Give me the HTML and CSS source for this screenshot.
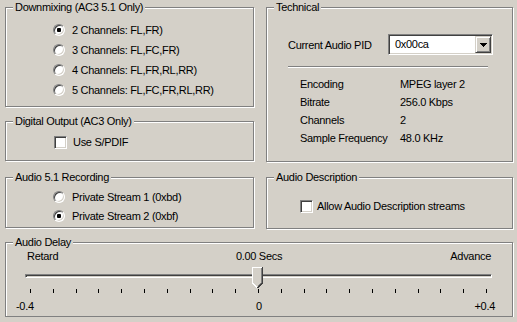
FILE: index.html
```html
<!DOCTYPE html>
<html lang="en">
<head>
    <meta charset="UTF-8">
    <title>Audio Settings</title>
    <link rel="stylesheet" href="styles.css">
</head>
<body>
<div class="dialog">
    <div class="col">
        <div class="group downmix">
            <span class="legend">Downmixing (AC3 5.1 Only)</span>
            <label class="opt"><span class="radio on"></span>2 Channels: FL,FR)</label>
            <label class="opt"><span class="radio"></span>3 Channels: FL,FC,FR)</label>
            <label class="opt"><span class="radio"></span>4 Channels: FL,FR,RL,RR)</label>
            <label class="opt"><span class="radio"></span>5 Channels: FL,FC,FR,RL,RR)</label>
        </div>

        <div class="group digital">
            <span class="legend">Digital Output (AC3 Only)</span>
            <label class="opt"><span class="check"></span>Use S/PDIF</label>
        </div>

        <div class="group rec">
            <span class="legend">Audio 5.1 Recording</span>
            <label class="opt"><span class="radio"></span>Private Stream 1 (0xbd)</label>
            <label class="opt"><span class="radio on"></span>Private Stream 2 (0xbf)</label>
        </div>
    </div>

    <div class="col">
        <div class="group technical">
            <span class="legend">Technical</span>
            <div class="pid-row">
                <span class="pid-label">Current Audio PID</span>
                <div class="combo">
                    <span class="combo-value">0x00ca</span>
                    <span class="combo-btn">
                        <svg width="7" height="4" viewBox="0 0 7 4"><path d="M0 0h7v1H0z M1 1h5v1H1z M2 2h3v1H2z M3 3h1v1H3z" fill="#000"/></svg>
                    </span>
                </div>
            </div>
            <div class="sep"></div>
            <div class="info">
                <span>Encoding</span><span>MPEG layer 2</span>
                <span>Bitrate</span><span>256.0 Kbps</span>
                <span>Channels</span><span>2</span>
                <span>Sample Frequency</span><span>48.0 KHz</span>
            </div>
        </div>

        <div class="group desc">
            <span class="legend">Audio Description</span>
            <label class="opt"><span class="check"></span>Allow Audio Description streams</label>
        </div>
    </div>

    <!-- audio delay slider -->
    <div class="group delay">
        <span class="legend">Audio Delay</span>
        <div class="delay-top">
            <span class="l">Retard</span>
            <span>0.00 Secs</span>
            <span class="r">Advance</span>
        </div>
        <div class="slider">
            <div class="track"></div>
            <svg class="thumb" width="11" height="21" viewBox="0 0 11 21" shape-rendering="crispEdges">
                <polygon points="0,0 11,0 11,16 5.5,21 0,16" fill="#d4d0c8"/>
                <path d="M0.5 16 V0.5 H10 M0.5 16 L5 20.5" stroke="#fff" fill="none"/>
                <path d="M10.5 0 V16 L5.5 21" stroke="#404040" fill="none"/>
                <path d="M9.5 1 V15.5 L5.5 19.5" stroke="#808080" fill="none"/>
            </svg>
        </div>
        <div class="ticks">
            <i></i><i></i><i></i><i></i><i></i><i></i><i></i>
            <i></i><i></i><i></i><i></i><i></i><i></i><i></i>
            <i></i><i></i><i></i><i></i><i></i><i></i><i></i>
        </div>
        <div class="delay-bottom">
            <span class="l">-0.4</span>
            <span>0</span>
            <span class="r">+0.4</span>
        </div>
    </div>
</div>
</body>
</html>
```

FILE: styles.css
```css
body {
    margin: 0;
    background-color: #d4d0c8;
    font-family: 'Liberation Sans', Arial, sans-serif;
    font-size: 11px;
    letter-spacing: -0.3px;
    color: #000;
}

.dialog {
    display: grid;
    grid-template-columns: 249px 247px;
    column-gap: 12px;
    row-gap: 13px;
    padding: 7px 4px 0 5px;
}

.col {
    display: flex;
    flex-direction: column;
}

/* etched group box */
.group {
    position: relative;
    box-sizing: border-box;
    border: 1px solid #808080;
    box-shadow: inset 1px 1px 0 #fff, 1px 1px 0 #fff;
}

.legend {
    position: absolute;
    top: -7px;
    left: 7px;
    padding: 0 2px;
    line-height: 13px;
    background-color: #d4d0c8;
    white-space: nowrap;
}

.opt {
    display: flex;
    align-items: center;
    height: 20px;
    white-space: nowrap;
}

.radio {
    flex: none;
    box-sizing: border-box;
    width: 12px;
    height: 12px;
    margin-right: 7px;
    border: 1px solid;
    border-color: #808080 #fff #fff #808080;
    border-radius: 50%;
    background: #fff;
    box-shadow: inset 1px 1px 0 #404040, inset -1px -1px 0 #d4d0c8;
}

.radio.on {
    background: radial-gradient(circle, #000 2px, #fff 2.5px);
}

.check {
    flex: none;
    box-sizing: border-box;
    width: 13px;
    height: 13px;
    margin-right: 6px;
    border: 1px solid;
    border-color: #808080 #fff #fff #808080;
    background: #fff;
    box-shadow: inset 1px 1px 0 #404040, inset -1px -1px 0 #d4d0c8;
}

.downmix {
    height: 100px;
    padding: 12px 0 0 47px;
}

.digital {
    height: 40px;
    margin-top: 14px;
    padding: 10px 0 0 48px;
}

.rec {
    height: 51px;
    margin-top: 16px;
    padding: 9px 0 0 47px;
}

.rec .opt {
    height: 19px;
}

.technical {
    height: 155px;
    padding: 26px 0 0 21px;
}

.pid-row {
    display: flex;
    align-items: center;
}

.pid-label {
    width: 100px;
}

.combo {
    display: flex;
    box-sizing: border-box;
    width: 105px;
    height: 21px;
    padding: 1px;
    border: 1px solid;
    border-color: #808080 #fff #fff #808080;
    background: #fff;
    box-shadow: inset 1px 1px 0 #404040, inset -1px -1px 0 #d4d0c8;
}

.combo-value {
    flex: 1;
    padding-left: 5px;
    line-height: 17px;
}

.combo-btn {
    display: flex;
    align-items: center;
    justify-content: center;
    box-sizing: border-box;
    width: 16px;
    height: 17px;
    border: 1px solid;
    border-color: #d4d0c8 #404040 #404040 #d4d0c8;
    background: #d4d0c8;
    box-shadow: inset 1px 1px 0 #fff, inset -1px -1px 0 #808080;
}

.sep {
    width: 200px;
    margin-top: 11px;
    border-top: 1px solid #808080;
    border-bottom: 1px solid #fff;
}

.info {
    display: grid;
    grid-template-columns: 100px auto;
    grid-auto-rows: 18px;
    align-items: center;
    margin-top: 7px;
    padding-left: 12px;
}

.desc {
    height: 52px;
    margin-top: 15px;
    padding: 18px 0 0 33px;
}

.desc .check {
    margin-right: 4px;
}

.delay {
    grid-column: 1 / -1;
    height: 75px;
    padding-top: 6px;
}

.delay-top,
.delay-bottom {
    display: grid;
    grid-template-columns: 1fr auto 1fr;
    line-height: 14px;
}

.delay-top {
    padding: 0 21px;
}

.delay-top .r,
.delay-bottom .r {
    justify-self: end;
}

.slider {
    position: relative;
    box-sizing: border-box;
    height: 21px;
    margin: 4px 20px 0 19px;
    padding-top: 7px;
}

.track {
    box-sizing: border-box;
    height: 4px;
    border: 1px solid;
    border-color: #808080 #fff #fff #808080;
    background: #d4d0c8;
    box-shadow: inset 1px 1px 0 #404040;
}

.thumb {
    position: absolute;
    top: 0;
    left: 227px;
}

.ticks {
    display: flex;
    justify-content: space-between;
    height: 4px;
    margin: 1px 25px 0 24px;
}

.ticks i {
    width: 1px;
    height: 4px;
    background: #000;
}

.delay-bottom {
    margin-top: 6px;
}

.delay-bottom .l {
    margin-left: 10px;
}

.delay-bottom .r {
    margin-right: 17px;
}
```
